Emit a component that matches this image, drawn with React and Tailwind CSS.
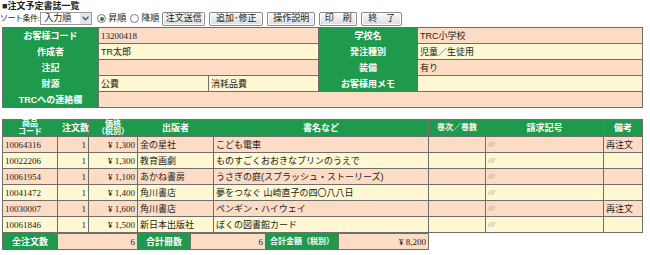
import React from 'react';

const jp = '[font-family:"Liberation_Sans","Noto_Sans_CJK_JP",sans-serif]';
const num = '[font-family:"Liberation_Serif","Noto_Sans_CJK_JP",serif]';

const head = 'bg-[#1f9a4d] text-white font-bold text-center border border-[#6e6e6e] px-1 whitespace-nowrap';
const cell = 'border border-[#6e6e6e] px-[2px] text-[#222] whitespace-nowrap overflow-hidden';
const peach = 'bg-[#fcdcc5]';
const cream = 'bg-[#fff8d2]';

const books = [
  { code: '10064316', qty: 1, price: '¥ 1,300', pub: '金の星社', title: 'こども電車', note: '再注文' },
  { code: '10022206', qty: 1, price: '¥ 1,300', pub: '教育画劇', title: 'ものすごくおおきなプリンのうえで', note: '' },
  { code: '10061954', qty: 1, price: '¥ 1,100', pub: 'あかね書房', title: 'うさぎの庭(スプラッシュ・ストーリーズ)', note: '' },
  { code: '10041472', qty: 1, price: '¥ 1,400', pub: '角川書店', title: '夢をつなぐ 山崎直子の四〇八八日', note: '' },
  { code: '10030007', qty: 1, price: '¥ 1,600', pub: '角川書店', title: 'ペンギン・ハイウェイ', note: '再注文' },
  { code: '10061846', qty: 1, price: '¥ 1,500', pub: '新日本出版社', title: 'ぼくの図書館カード', note: '' },
];

const Btn = ({ children, w }) => (
  <button
    className={`${w} h-[14px] border border-[#8a8a8a] rounded-[2px] bg-gradient-to-b from-[#fbfbfb] to-[#dcdcdc] text-[9px] leading-none text-[#222] whitespace-nowrap shadow-[inset_0_0_0_1px_#fff]`}
  >
    {children}
  </button>
);

const Radio = ({ on, label }) => (
  <label className="flex items-center gap-[2px] text-[9px] whitespace-nowrap">
    <span className="w-[9px] h-[9px] rounded-full border border-[#7a7a7a] bg-white flex items-center justify-center">
      {on && <span className="w-[4px] h-[4px] rounded-full bg-[#2a7a3a]" />}
    </span>
    {label}
  </label>
);

export default function App() {
  return (
    <div className={`w-[650px] h-[255px] bg-white overflow-hidden ${jp} text-[9px] text-[#222]`}>
      <div className="pl-[2px] pt-[1px] h-[11px] leading-[10px] font-bold text-[9px] whitespace-nowrap">■注文予定書誌一覧</div>

      <div className="flex items-center h-[15px]">
        <span className="text-[8px] tracking-[-0.5px] whitespace-nowrap mr-[1px]">ソート条件:</span>
        <div className="w-[52px] h-[13px] border border-[#9a9a9a] bg-white flex items-center justify-between pl-[3px]">
          <span className="text-[9px] leading-none">入力順</span>
          <span className="w-[11px] h-[11px] bg-[#dfe6ef] flex items-center justify-center">
            <svg width="7" height="5" viewBox="0 0 7 5">
              <path d="M0.5 0.8 L3.5 3.8 L6.5 0.8" fill="none" stroke="#4a5a78" strokeWidth="1.4" />
            </svg>
          </span>
        </div>
        <div className="flex items-center gap-[4px] ml-[5px]">
          <Radio on label="昇順" />
          <Radio label="降順" />
        </div>
        <div className="flex items-center gap-[4px] ml-[3px]">
          <Btn w="w-[43px]">注文送信</Btn>
          <Btn w="w-[54px]">追加･修正</Btn>
          <Btn w="w-[48px]">操作説明</Btn>
          <Btn w="w-[38px]">印　刷</Btn>
          <Btn w="w-[41px]">終　了</Btn>
        </div>
      </div>

      <table className="ml-[2px] mt-[1px] w-[640px] table-fixed border-collapse text-[9px] leading-[12px]">
        <colgroup>
          <col className="w-[96px]" />
          <col className="w-[110px]" />
          <col className="w-[110px]" />
          <col className="w-[99px]" />
          <col className="w-[225px]" />
        </colgroup>
        <tbody>
          <tr className="h-[16px]">
            <td className={head}>お客様コード</td>
            <td colSpan={2} className={`${cell} ${peach} ${num}`}>13200418</td>
            <td className={head}>学校名</td>
            <td className={`${cell} ${peach}`}>TRC小学校</td>
          </tr>
          <tr className="h-[16px]">
            <td className={head}>作成者</td>
            <td colSpan={2} className={`${cell} ${cream}`}>TR太郎</td>
            <td className={head}>発注種別</td>
            <td className={`${cell} ${cream}`}>児童／生徒用</td>
          </tr>
          <tr className="h-[16px]">
            <td className={head}>注記</td>
            <td colSpan={2} className={`${cell} ${peach}`}></td>
            <td className={head}>装備</td>
            <td className={`${cell} ${peach}`}>有り</td>
          </tr>
          <tr className="h-[16px]">
            <td className={head}>財源</td>
            <td className={`${cell} ${cream}`}>公費</td>
            <td className={`${cell} ${cream}`}>消耗品費</td>
            <td className={head}>お客様用メモ</td>
            <td className={`${cell} ${cream}`}></td>
          </tr>
          <tr className="h-[16px]">
            <td className={head}>TRCへの連絡欄</td>
            <td colSpan={4} className={`${cell} ${peach}`}></td>
          </tr>
        </tbody>
      </table>

      <table className="ml-[2px] mt-[11px] w-[640px] table-fixed border-collapse text-[9px] leading-[12px]">
        <colgroup>
          <col className="w-[55px]" />
          <col className="w-[31px]" />
          <col className="w-[49px]" />
          <col className="w-[76px]" />
          <col className="w-[215px]" />
          <col className="w-[57px]" />
          <col className="w-[118px]" />
          <col className="w-[39px]" />
        </colgroup>
        <thead>
          <tr className="h-[17px]">
            <th className={`${head} leading-[8px] text-[8px] px-0`}>商品<br />コード</th>
            <th className={`${head} px-0`}>注文数</th>
            <th className={`${head} leading-[8px] text-[8px] px-0`}>価格<br />（税別）</th>
            <th className={head}>出版者</th>
            <th className={head}>書名など</th>
            <th className={`${head} px-0 text-[8px]`}>巻次／巻数</th>
            <th className={head}>請求記号</th>
            <th className={head}>備考</th>
          </tr>
        </thead>
        <tbody>
          {books.map((b, i) => {
            const bg = i % 2 === 0 ? peach : cream;
            return (
              <tr key={b.code} className="h-[16px]">
                <td className={`${cell} ${bg} ${num}`}>{b.code}</td>
                <td className={`${cell} ${bg} ${num} text-right`}>{b.qty}</td>
                <td className={`${cell} ${bg} ${num} text-right`}>{b.price}</td>
                <td className={`${cell} ${bg}`}>{b.pub}</td>
                <td className={`${cell} ${bg}`}>{b.title}</td>
                <td className={`${cell} ${bg}`}></td>
                <td className={`${cell} ${bg} text-[#a0a0a0] italic text-[8px]`}>///</td>
                <td className={`${cell} ${bg}`}>{b.note}</td>
              </tr>
            );
          })}
        </tbody>
      </table>

      <table className="ml-[2px] w-[426px] table-fixed border-collapse text-[9px] leading-[12px]">
        <colgroup>
          <col className="w-[55px]" />
          <col className="w-[80px]" />
          <col className="w-[53px]" />
          <col className="w-[75px]" />
          <col className="w-[73px]" />
          <col className="w-[90px]" />
        </colgroup>
        <tbody>
          <tr className="h-[16px]">
            <td className={`${head} px-0`}>全注文数</td>
            <td className={`${cell} ${peach} ${num} text-right`}>6</td>
            <td className={`${head} px-0`}>合計冊数</td>
            <td className={`${cell} ${peach} ${num} text-right`}>6</td>
            <td className={`${head} px-0 text-[8px]`}>合計金額（税別）</td>
            <td className={`${cell} ${peach} ${num} text-right`}>¥ 8,200</td>
          </tr>
        </tbody>
      </table>
    </div>
  );
}
